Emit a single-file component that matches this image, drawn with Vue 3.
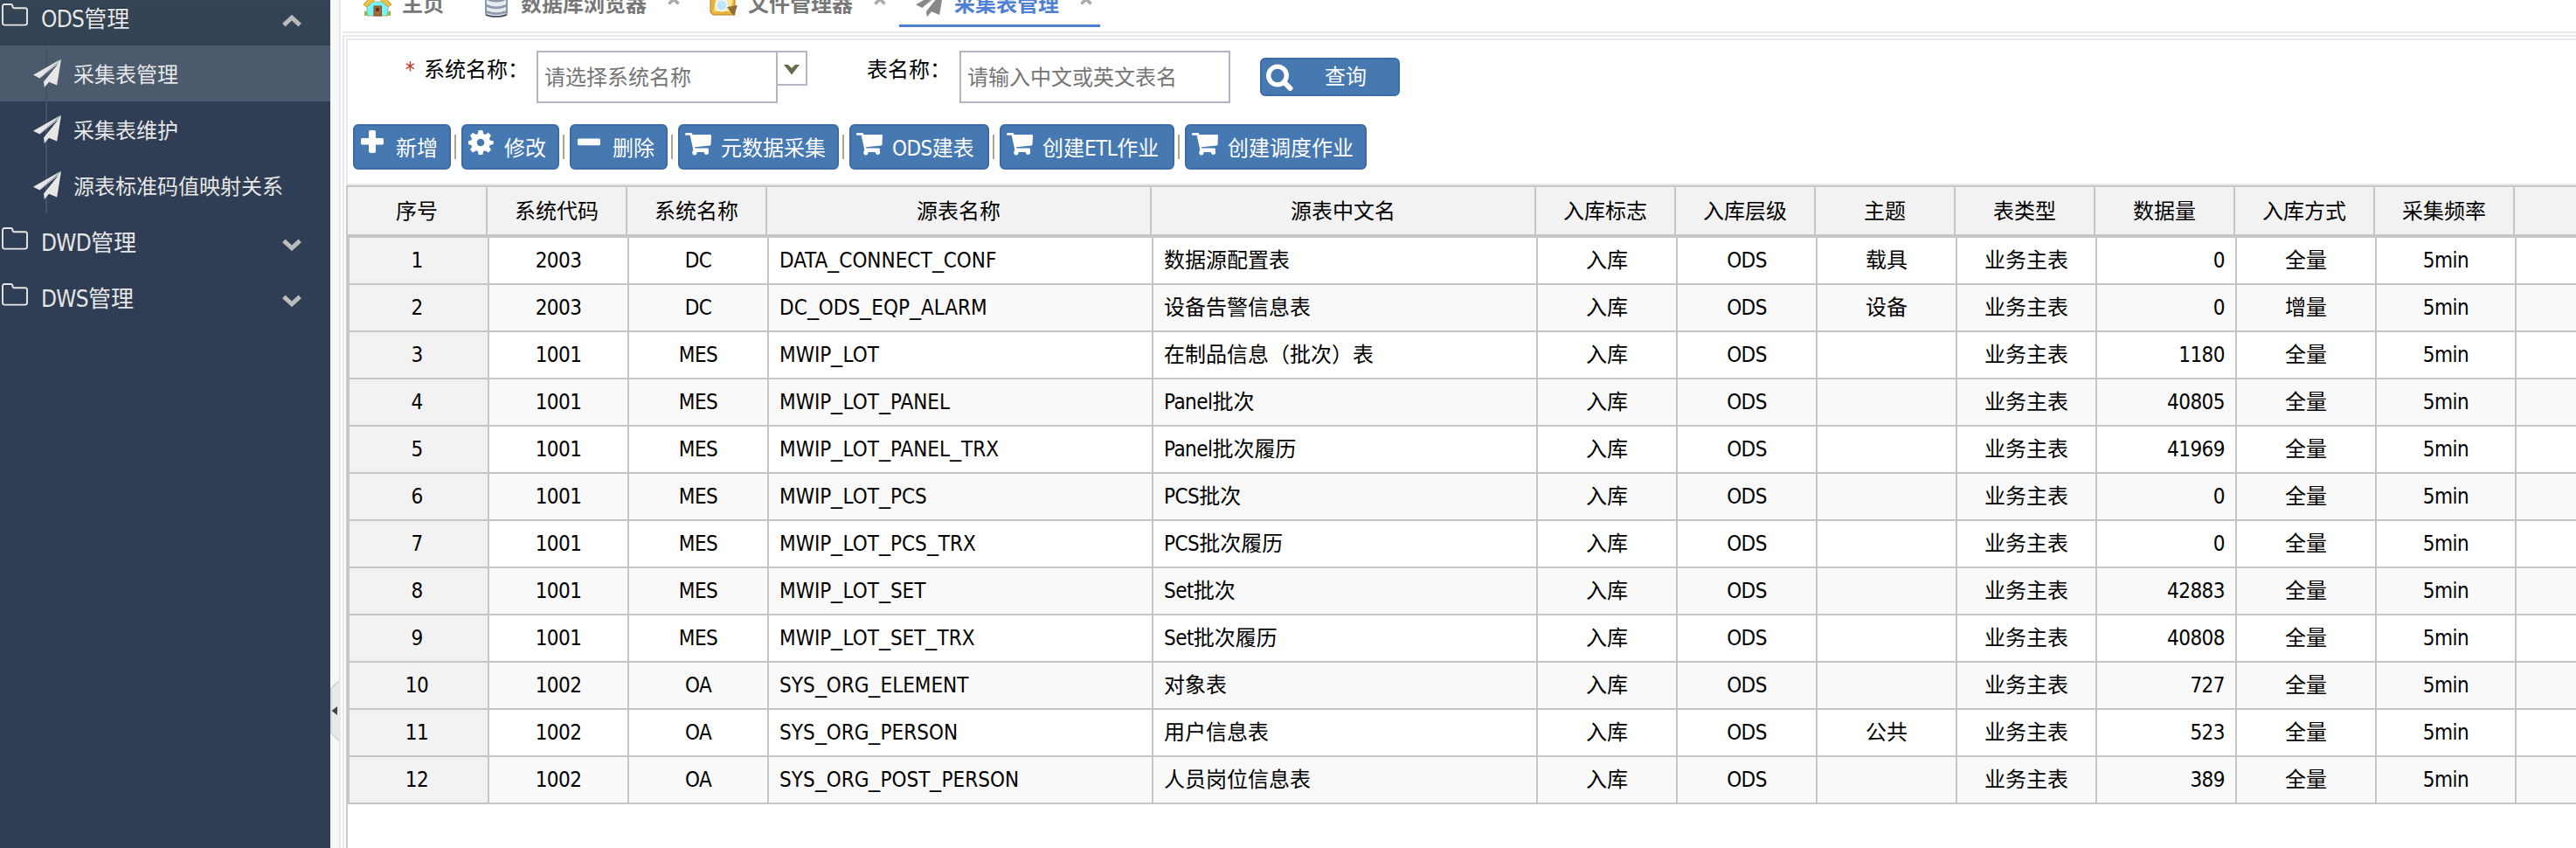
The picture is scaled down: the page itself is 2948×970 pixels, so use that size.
<script setup>
import { h } from 'vue'

const Txt = (props) =>
  h('span', { class: 'txt' },
    props.value
      .split(/([\x20-\x7e]+)/)
      .filter(Boolean)
      .map((run) => (/^[\x20-\x7e]+$/.test(run)
        ? h('span', { class: run.includes('_') ? 'latin ident' : 'latin' },
            run.split(/(_)/).map((p) => (p === '_' ? h('span', { class: 'us' }, p) : p)))
        : run)))
Txt.props = ['value']

const subItems = ['采集表管理', '采集表维护', '源表标准码值映射关系']
const closedGroups = ['DWD管理', 'DWS管理']

const tools = [
  { label: '新增', icon: 'plus', width: 112 },
  { label: '修改', icon: 'cog', width: 112 },
  { label: '删除', icon: 'minus', width: 112 },
  { label: '元数据采集', icon: 'cart', width: 184 },
  { label: 'ODS建表', icon: 'cart', width: 160 },
  { label: '创建ETL作业', icon: 'cart', width: 200 },
  { label: '创建调度作业', icon: 'cart', width: 208 },
]

const columns = ['序号', '系统代码', '系统名称', '源表名称', '源表中文名', '入库标志', '入库层级', '主题', '表类型', '数据量', '入库方式', '采集频率', '']

const rows = [
  ['2003', 'DC', 'DATA_CONNECT_CONF', '数据源配置表', '载具', '0', '全量'],
  ['2003', 'DC', 'DC_ODS_EQP_ALARM', '设备告警信息表', '设备', '0', '增量'],
  ['1001', 'MES', 'MWIP_LOT', '在制品信息（批次）表', '', '1180', '全量'],
  ['1001', 'MES', 'MWIP_LOT_PANEL', 'Panel批次', '', '40805', '全量'],
  ['1001', 'MES', 'MWIP_LOT_PANEL_TRX', 'Panel批次履历', '', '41969', '全量'],
  ['1001', 'MES', 'MWIP_LOT_PCS', 'PCS批次', '', '0', '全量'],
  ['1001', 'MES', 'MWIP_LOT_PCS_TRX', 'PCS批次履历', '', '0', '全量'],
  ['1001', 'MES', 'MWIP_LOT_SET', 'Set批次', '', '42883', '全量'],
  ['1001', 'MES', 'MWIP_LOT_SET_TRX', 'Set批次履历', '', '40808', '全量'],
  ['1002', 'OA', 'SYS_ORG_ELEMENT', '对象表', '', '727', '全量'],
  ['1002', 'OA', 'SYS_ORG_PERSON', '用户信息表', '公共', '523', '全量'],
  ['1002', 'OA', 'SYS_ORG_POST_PERSON', '人员岗位信息表', '', '389', '全量'],
].map(([code, sys, name, cn, topic, count, mode], i) => [
  String(i + 1), code, sys, name, cn, '入库', 'ODS', topic, '业务主表', count, mode, '5min', '',
])

const align = (i) => (i === 3 || i === 4 ? 'left' : i === 9 ? 'right' : '')
</script>

<template>
  <div class="app">
    <svg class="defs" width="0" height="0">
      <symbol id="plane" viewBox="0 0 32 32">
        <path d="M32 0 0 18.3 7.5 22z" />
        <path d="M32 .6 27.2 30 18 26.2 12.8 32.4 12 26 29.3 4.4 8.2 22z" />
      </symbol>
      <symbol id="folder" viewBox="0 0 30 26">
        <path d="M1 22.5V3.2Q1 1 3.2 1H10Q12.4 1 12.4 3.2V3.6Q12.4 5.2 14.6 5.2H26.6Q29 5.2 29 7.6V22Q29 24.6 26.6 24.6H3.4Q1 24.6 1 22.5Z" fill="none" stroke="currentColor" stroke-width="1.9" />
      </symbol>
      <symbol id="chev" viewBox="0 0 22 14">
        <path d="M1.8 2.4 11 10.8 20.2 2.4" fill="none" stroke="currentColor" stroke-width="5" />
      </symbol>
      <symbol id="close" viewBox="0 0 14 14">
        <path d="M1.5 1.5 12.5 12.5M12.5 1.5 1.5 12.5" stroke="currentColor" stroke-width="3.6" />
      </symbol>
      <symbol id="plus" viewBox="0 0 30 30">
        <path d="M11.5 1H16Q18 1 18 3V10H25.500Q27 10 27 11.500V16Q27 17.500 25.500 17.500H18V25Q18 27 16 27H12Q10 27 10 25V17.500H2.500Q1 17.500 1 16V11.500Q1 10 2.500 10H10V3Q10 1 11.500 1Z" />
      </symbol>
      <symbol id="minus" viewBox="0 0 30 30">
        <rect x="1" y="10.500" width="26" height="7.800" rx="1.600" />
      </symbol>
      <symbol id="cog" viewBox="0 0 30 30">
        <path fill-rule="evenodd" d="M11.700 1H16.300L17.200 5 19.300 5.900 22.800 3.700 26 7 23.900 10.500 24.700 12.500 28.700 13.300V17L24.700 17.900 23.900 19.900 26 23.300 22.900 26.400 19.300 24.300 17.200 25.100 16.300 29H11.700L10.800 25.100 8.700 24.300 5.200 26.400 2 23.300 4.100 19.900 3.300 17.900 0 17V13.300L3.300 12.500 4.100 10.500 2 7 5.200 3.700 8.700 5.900 10.800 5ZM14 10.700A4.300 4.300 0 1 0 14 19.300 4.300 4.300 0 1 0 14 10.700Z" />
      </symbol>
      <symbol id="cart" viewBox="0 0 30 30">
        <path d="M1.300 4H7Q7.900 4 8.200 5L8.500 6H28.800Q30 6 30 7.200L29.500 17.200Q29.400 18.300 28.300 18.400L11 20.200 11.300 21.600H25.500Q27 21.600 27 23 27 24.400 26.600 24.600A2.700 2.700 0 1 1 21.800 26H13.500A2.700 2.700 0 1 1 8.400 25.700L9.300 23.300 5.700 6.700H1.300Q0 6.700 0 5.400 0 4 1.300 4Z" />
      </symbol>
    </svg>

    <aside class="sidebar">
      <div class="group first">
        <svg class="folder"><use href="#folder" /></svg>
        <Txt value="ODS管理" />
        <svg class="arrow up"><use href="#chev" /></svg>
      </div>
      <div class="subs">
        <div v-for="(s, i) in subItems" :key="s" class="sub" :class="{ active: i === 0 }">
          <svg class="plane"><use href="#plane" /></svg><span>{{ s }}</span>
        </div>
      </div>
      <div v-for="g in closedGroups" :key="g" class="group">
        <svg class="folder"><use href="#folder" /></svg>
        <Txt :value="g" />
        <svg class="arrow"><use href="#chev" /></svg>
      </div>
    </aside>

    <div class="splitter">
      <svg width="10" height="70" viewBox="0 0 10 70">
        <path d="M10 0 0 9V61L10 70Z" fill="#e9e9e9" />
        <path d="M10 1 .8 9.500V60.500L10 69" fill="none" stroke="#d3d3d3" stroke-width="1.600" />
        <path d="M8 30V40L1.500 35Z" fill="#444" />
      </svg>
    </div>

    <main class="main">
      <nav class="tabs">
        <div class="tab home">
          <svg width="32" height="32" viewBox="0 0 32 32">
            <path d="M4 14H28V30H4Z" fill="#74f4fa" stroke="#b4a882" />
            <path d="M1 25Q3 23 5 27V30H1ZM31 25Q29 23 27 27V30H31Z" fill="#8cc04c" />
            <rect x="12" y="19" width="8.500" height="11" fill="#a9683a" stroke="#74502c" />
            <rect x="14" y="21" width="4" height="4" fill="#5c3a20" />
            <path d="M0 17 16 1 32 17 28.500 20 16 9 3.500 20Z" fill="#ecc344" stroke="#c99c2c" />
          </svg>
          <b>主页</b>
        </div>
        <div class="tab db">
          <svg width="28" height="32" viewBox="0 0 28 32">
            <path d="M1 5V28Q3 32 14 32T27 28V5Q25 1 14 1T1 5Z" fill="#8e99aa" />
            <path d="M3 12Q14 17 25 12V17Q14 22 3 17ZM3 20Q14 24.500 25 20V24Q14 28.500 3 24ZM3 27Q14 31 25 27V28Q14 33 3 29ZM3 5Q14 10 25 5V9Q14 14 3 9Z" fill="#e6ebf1" />
            <path d="M2 29Q14 33 26 29" fill="none" stroke="#3d4657" stroke-width="1.500" />
          </svg>
          <b>数据库浏览器</b>
          <svg class="close"><use href="#close" /></svg>
        </div>
        <div class="tab files">
          <svg width="32" height="32" viewBox="0 0 32 32">
            <path d="M1 6H13L16 9H29V29H4L1 26Z" fill="#e8b43c" stroke="#b57d1d" />
            <path d="M7 10H27L24 25H5Z" fill="#fbe48e" />
            <circle cx="14" cy="18" r="6.500" fill="#bfe6fa" stroke="#f4f7fa" stroke-width="2" />
            <path d="M20 20 32 18 28 30 25 27Z" fill="#936c38" />
          </svg>
          <b>文件管理器</b>
          <svg class="close"><use href="#close" /></svg>
        </div>
        <div class="tab current">
          <svg width="32" height="32"><use href="#plane" /></svg>
          <b>采集表管理</b>
          <svg class="close"><use href="#close" /></svg>
        </div>
      </nav>

      <div class="frame">
        <section class="panel">
          <div class="search">
            <label class="l1"><i>*</i>系统名称：</label>
            <div class="field combo">请选择系统名称</div>
            <div class="trigger">
              <svg width="18" height="12" viewBox="0 0 18 12"><path d="M0 0H5L9 4 13 0H18L9 11.500Z" fill="#66694a" /></svg>
            </div>
            <label class="l2">表名称：</label>
            <div class="field text">请输入中文或英文表名</div>
            <div class="btn query">
              <svg width="31" height="32" viewBox="0 0 31 32">
                <circle cx="13" cy="13.500" r="10.300" fill="none" stroke="#fff" stroke-width="5.300" />
                <path d="M20.500 21 27.500 28" stroke="#fff" stroke-width="6" stroke-linecap="round" />
              </svg>
              <span>查询</span>
            </div>
          </div>
          <div class="tools">
            <template v-for="(t, i) in tools" :key="t.label">
              <span v-if="i" class="sep"></span>
              <div class="btn tool" :style="{ width: t.width + 'px' }">
                <svg width="30" height="30"><use :href="'#' + t.icon" /></svg>
                <Txt :value="t.label" />
              </div>
            </template>
          </div>
        </section>

        <section class="table">
          <div class="tr head">
            <div v-for="(c, i) in columns" :key="i" class="td">{{ c }}</div>
          </div>
          <div class="body">
            <div v-for="r in rows" :key="r[0]" class="tr">
              <div v-for="(c, i) in r" :key="i" class="td" :class="align(i)"><Txt :value="c" /></div>
            </div>
          </div>
        </section>
      </div>
    </main>
  </div>
</template>

<style>
body { margin: 0; overflow: hidden; }
.latin { letter-spacing: -0.55px; }
.latin.ident { letter-spacing: 0; }
.us { display: inline-block; width: 13.1px; line-height: 1; transform: scaleX(1.21); transform-origin: 0 50%; }
.ident .us { text-indent: 0; }
</style>

<style scoped>
.app {
  display: flex;
  width: 2948px;
  height: 970px;
  overflow: hidden;
  background: #fff;
  color: #000;
  font: 24px/32px "DejaVu Sans Condensed", "Noto Sans CJK SC", sans-serif;
  white-space: nowrap;
}
.app * { box-sizing: border-box; }
.defs { position: absolute; }
svg { display: block; flex: none; fill: currentColor; }

.sidebar { width: 378px; flex: none; background: #2f3e54; color: #e6e6e6; }
.group { display: flex; align-items: center; height: 64px; padding: 0 33px 0 2px; font-size: 26px; }
.group .txt { margin-top: 3px; }
.group .txt :deep(.latin) { letter-spacing: -0.7px; }
.group.first { height: 52px; padding-bottom: 12px; background: linear-gradient(#354456, #314353); text-shadow: 0 -1px 1px rgba(0, 0, 0, .3); }
.folder { width: 30px; height: 26px; margin: 0 15px 6px 0; }
.arrow { width: 22px; height: 14px; margin: 7px 0 0 auto; color: #bbb; }
.arrow.up { transform: rotate(180deg); }
.subs { background: linear-gradient(#435365, #435365) 52px 0 / 2px 100% no-repeat; }
.sub { display: flex; align-items: center; height: 64px; padding-left: 38px; }
.sub span { margin-top: 4px; }
.sub.active { background: linear-gradient(#435365, #435365) 52px 0 / 2px 100% no-repeat, #4b5a6c; }
.plane { width: 32px; height: 33px; margin: 0 14px 2px 0; }

.splitter { width: 10px; flex: none; padding-top: 778px; background: #f7f7f7; }

.main { flex: 1; min-width: 0; border-left: 2px solid #e8e8ee; padding-left: 2px; }
.tabs { display: flex; height: 38px; border-bottom: 2px solid #e8e8ee; color: #777; overflow: hidden; }
.tab { display: flex; height: 31px; align-items: flex-start; }
.tab > svg { margin-top: -12px; }
.tab b { margin: -11px 0 0 12px; }
.tab .close { width: 14px; height: 14px; margin: -8px 0 0 24px; color: #aaa; }
.home { padding-left: 24px; width: 162px; }
.db { width: 258px; }
.db b { margin-left: 14px; }
.files b { margin-left: 12px; }
.files { width: 217px; }
.current { padding-left: 19px; width: 230px; border-bottom: 3px solid #5080d4; color: #888; }
.current > svg:first-child { margin-top: -13px; }
.current b { color: #5080d4; }

.frame { height: 930px; margin-top: 2px; border: solid #e8e8ee; border-width: 2px 0 0 2px; padding: 2px 0 0 2px; }
.panel { height: 168px; border: 2px solid #e8e8ee; border-right: 0; }
.search { display: flex; align-items: flex-start; height: 96px; padding-top: 12px; }
label { line-height: 32px; padding-top: 6px; }
.l1 { width: 216px; padding-left: 66px; }
.l1 i { display: inline-block; width: 21px; font-style: normal; color: #c9281c; }
.field { height: 60px; border: 2px solid #b5b5c7; padding-left: 7px; line-height: 59px; color: #757575; }
.combo { width: 276px; }
.trigger { width: 34px; height: 40px; border: 2px solid #b5b5c7; border-left: 0; padding: 14px 0 0 7px; }
.l2 { width: 174px; padding-left: 68px; }
.text { width: 310px; }
.btn { display: flex; background: #4678b2; border: 2px solid #3c6ba6; border-radius: 6px; color: #fff; }
.query { width: 160px; height: 44px; margin: 8px 0 0 34px; padding: 5px 0 0 5px; }
.query span { margin: -1px 0 0 36px; }
.tools { display: flex; align-items: center; height: 52px; padding-left: 6px; }
.tool { height: 52px; padding: 4px 0 0 6px; }
.tool .txt { margin: 6px 0 0 11px; }
.sep { width: 2px; height: 28px; margin: 0 6px 0 4px; background: #aaa596; }

.table { height: 758px; border-left: 2px solid #c8c8c8; border-top: 2px solid #c8c8c8; }
.tr { display: grid; grid-template-columns: repeat(3, 160px) repeat(2, 440px) repeat(7, 160px) 1fr; height: 54px; }
.td { border-right: 2px solid #c6c6c6; line-height: 52px; text-align: center; overflow: hidden; }
.td:last-child { border-right: 0; }
.head { background: #f2f2f2; }
.head .td { line-height: 56px; }
.body { border-left: 2px solid #c6c6c6; border-top: 4px solid #c6c6c6; }
.body .td { border-bottom: 2px solid #c6c6c6; }
.body .tr:nth-child(even) { background: #f9f9f9; }
.body .td:first-child { background: #f2f2f2; padding-right: 4px; }
.td.left { text-align: left; padding-left: 12px; }
.td.right { text-align: right; padding-right: 12px; }
</style>
